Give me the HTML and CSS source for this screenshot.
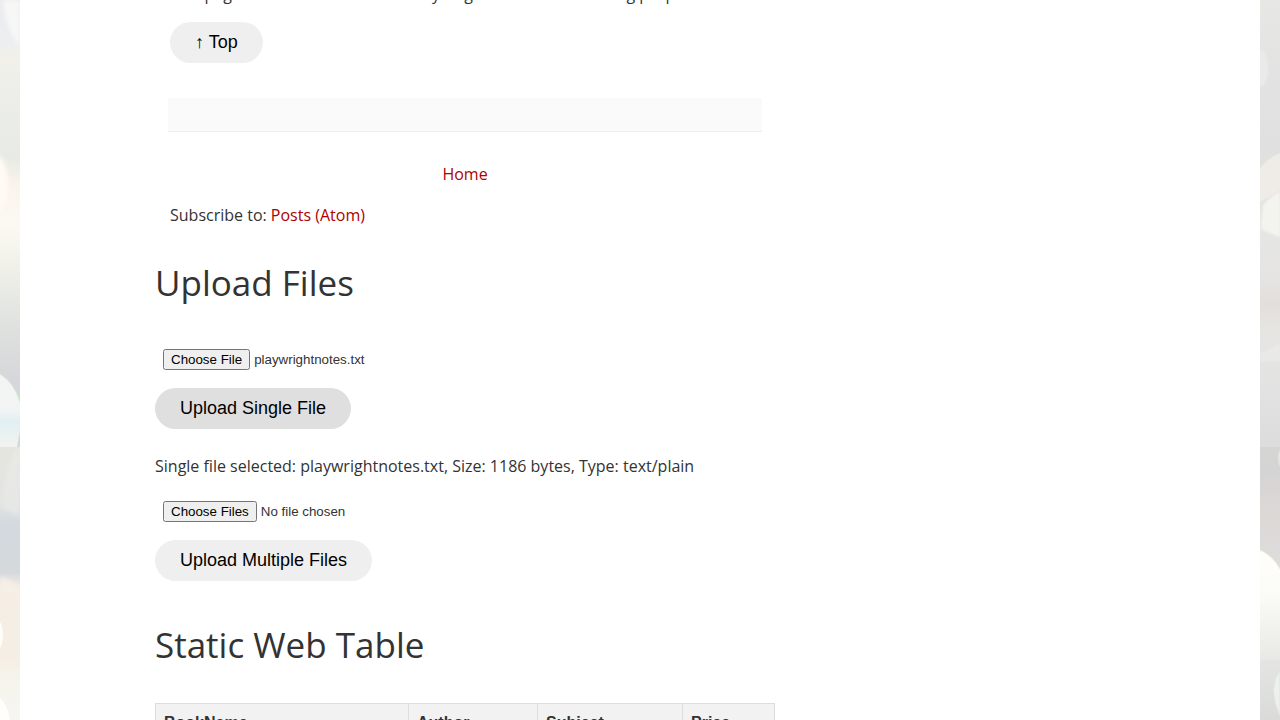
FILE: index.html
```html
<!DOCTYPE html>
<html lang="en">
<head>
<meta charset="utf-8">
<meta name="viewport" content="width=device-width, initial-scale=1">
<title>Upload Files</title>
<link rel="stylesheet" href="styles.css">
</head>
<body>
<div class="page">
  <svg class="backdrop" viewBox="0 0 20 720" preserveAspectRatio="none" aria-hidden="true">
    <defs>
      <linearGradient id="la" x1="0" y1="0" x2="0" y2="1">
        <stop offset="0" stop-color="#eaebee"/><stop offset=".09" stop-color="#edeef0"/>
        <stop offset=".13" stop-color="#f1f1e9"/><stop offset=".2" stop-color="#edeee9"/>
        <stop offset=".35" stop-color="#e8eae5"/><stop offset=".42" stop-color="#fbf3eb"/>
        <stop offset=".5" stop-color="#fcf9f3"/><stop offset=".58" stop-color="#f2f2eb"/>
        <stop offset=".68" stop-color="#e5e7e2"/><stop offset=".77" stop-color="#dcdddd"/>
        <stop offset=".85" stop-color="#d6d7da"/><stop offset="1" stop-color="#d5d7d9"/>
      </linearGradient>
      <linearGradient id="lb" x1="0" y1="0" x2="0" y2="1">
        <stop offset="0" stop-color="#e5e5df"/><stop offset=".2" stop-color="#e2e4e2"/>
        <stop offset=".28" stop-color="#d3d9df"/><stop offset=".46" stop-color="#d5d9dc"/>
        <stop offset=".52" stop-color="#f6eee6"/><stop offset=".78" stop-color="#f5eee4"/>
        <stop offset=".84" stop-color="#f5f4ec"/><stop offset="1" stop-color="#f7f5f0"/>
      </linearGradient>
      <linearGradient id="lc" x1="0" y1="0" x2="0" y2="1">
        <stop offset="0" stop-color="#f3f5f4"/><stop offset=".5" stop-color="#f2f4f3"/>
        <stop offset=".65" stop-color="#e1eff3"/><stop offset="1" stop-color="#f3f3ef"/>
      </linearGradient>
      <filter id="ls" x="-50%" y="-20%" width="200%" height="140%"><feGaussianBlur stdDeviation="2"/></filter>
    </defs>
    <rect width="20" height="447" fill="url(#la)"/>
    <path d="M3 0Q7 34 20 46V0Z" fill="#f7f7f6" filter="url(#ls)"/>
    <ellipse cx="-4" cy="184" rx="12" ry="29" fill="#fffaf3" filter="url(#ls)"/>
    <path d="M0 374Q14 382 20 402V430L17 447H0Z" fill="url(#lc)"/>
    <path d="M0 374Q14 382 20 402" fill="none" stroke="#ccebcf" stroke-width="1"/>
    <rect y="447" width="20" height="273" fill="url(#lb)"/>
    <path d="M17 447Q4 468 2 508L20 518V447Z" fill="#ebebe8" opacity=".6" filter="url(#ls)"/>
    <path d="M0 577Q10 578 20 589V594H0Z" fill="#f5efe7" filter="url(#ls)"/>
    <ellipse cx="-2" cy="635" rx="5" ry="14" fill="#fffdf7"/>
    <path d="M0 698Q7 704 10 720H0Z" fill="#fffefa"/>
  </svg>
  <main class="content">
    <div class="column">
      <section class="post">
        <p class="notice">This page includes some material by original demos for testing purposes</p>
        <button class="pill" type="button">↑ Top</button>
        <div class="post-footer"></div>
        <nav class="pager"><a href="#">Home</a></nav>
        <p class="feed">Subscribe to: <a href="#">Posts (Atom)</a></p>
      </section>

      <h2>Upload Files</h2>
      <form class="upload">
        <input class="file" type="file" id="single" aria-label="Single file">
        <button class="pill pill-active" type="button">Upload Single File</button>
        <p class="status">Single file selected: playwrightnotes.txt, Size: 1186 bytes, Type: text/plain</p>
      </form>
      <form class="upload">
        <input class="file" type="file" id="multiple" multiple aria-label="Multiple files">
        <button class="pill" type="button">Upload Multiple Files</button>
      </form>

      <h2>Static Web Table</h2>
      <table class="books">
        <colgroup><col class="col-book"><col class="col-author"><col class="col-subject"><col></colgroup>
        <thead>
          <tr><th>BookName</th><th>Author</th><th>Subject</th><th>Price</th></tr>
        </thead>
      </table>
    </div>
  </main>
  <svg class="backdrop" viewBox="0 0 20 720" preserveAspectRatio="none" aria-hidden="true">
    <defs>
      <linearGradient id="ra" x1="0" y1="0" x2="0" y2="1">
        <stop offset="0" stop-color="#e7e7e4"/><stop offset=".15" stop-color="#e3e3e3"/>
        <stop offset=".33" stop-color="#e0e0e1"/><stop offset=".5" stop-color="#e6e6e4"/>
        <stop offset=".62" stop-color="#e5e4e2"/><stop offset=".68" stop-color="#e3dedb"/>
        <stop offset=".74" stop-color="#e6e5e2"/><stop offset=".85" stop-color="#e3e3e3"/>
        <stop offset="1" stop-color="#dcdcdc"/>
      </linearGradient>
      <linearGradient id="rb" x1="0" y1="0" x2="0" y2="1">
        <stop offset="0" stop-color="#d6d5d4"/><stop offset=".1" stop-color="#d5d4d4"/>
        <stop offset=".23" stop-color="#dcd8d6"/><stop offset=".4" stop-color="#dcdcda"/>
        <stop offset=".7" stop-color="#e8e9e5"/><stop offset=".85" stop-color="#e1e1e0"/>
        <stop offset="1" stop-color="#dadada"/>
      </linearGradient>
      <linearGradient id="rc" x1="0" y1="0" x2="0" y2="1">
        <stop offset="0" stop-color="#fffefb"/><stop offset=".4" stop-color="#fbfbf8"/>
        <stop offset="1" stop-color="#e8e9e5"/>
      </linearGradient>
      <filter id="rs" x="-50%" y="-20%" width="200%" height="140%"><feGaussianBlur stdDeviation="1"/></filter>
    </defs>
    <rect width="20" height="447" fill="url(#ra)"/>
    <ellipse cx="1" cy="68" rx="7" ry="18" fill="#e9ebe9" filter="url(#rs)"/>
    <path d="M0 168Q8 158 20 153V190L2 201H0Z" fill="#efece8"/>
    <path d="M20 191Q7 199 3 206L1 229L20 237Z" fill="#f4f4ef" filter="url(#rs)"/>
    <path d="M20 343L0 354V361H20Z" fill="#e9e9e7" filter="url(#rs)"/>
    <rect y="447" width="20" height="273" fill="url(#rb)"/>
    <path d="M0 550Q13 556 20 569V660H0Z" fill="url(#rc)"/>
    <path d="M0 550Q13 556 20 569" fill="none" stroke="#f8ecd9" stroke-width="1"/>
    <path d="M20 670Q7 688 20 716Z" fill="#eff0ed" stroke="#d9e9d9"/>
    <ellipse cx="21" cy="458" rx="3" ry="9" fill="#e3e5df"/>
  </svg>
</div>
<script src="main.js"></script>
</body>
</html>
```

FILE: styles.css
```css
* { box-sizing: border-box; }

body {
  margin: 0;
  background: #fff;
  color: #333;
  font: 16px/22px "Open Sans", "Noto Sans", sans-serif;
}

a { color: #b00000; text-decoration: none; }
p { margin: 0; }

.page {
  display: flex;
  height: 100vh;
  overflow: hidden;
}

.backdrop { flex: none; width: 20px; height: 100%; }

.content { flex: 1; padding: 0 135px; }
.column { max-width: 620px; }

.post { padding: 0 15px; }
.notice { margin-top: -17px; margin-bottom: 17px; white-space: nowrap; }

.pill {
  display: block;
  padding: 10px 25px;
  border: 0;
  border-radius: 25px;
  background: #efefef;
  color: #000;
  font: 18px/21px "Liberation Sans", Arial, sans-serif;
}
.pill-active { background: #dfdfdf; }

.post-footer {
  height: 34px;
  margin: 35px -2px 31px;
  border-bottom: 1px solid #eee;
  background: #fafafa;
}

.pager { text-align: center; }
.feed { margin-top: 19px; }

h2 {
  margin: 32px 0 33px;
  font-size: 35px;
  font-weight: 400;
  line-height: 50px;
}
.upload + h2 { margin-top: 39px; }

.upload { margin-bottom: 16px; }
.file {
  display: block;
  width: 100%;
  margin-bottom: 10px;
  padding: 8px;
  color: #333;
}
.status { margin-top: 26px; }

.books {
  width: 100%;
  border-collapse: collapse;
  table-layout: fixed;
  font-family: "Liberation Sans", Arial, sans-serif;
}
.books th {
  padding: 8px;
  border: 1px solid #ddd;
  background: #f2f2f2;
  text-align: left;
}
.col-book { width: 253px; }
.col-author { width: 129px; }
.col-subject { width: 145px; }
```

FILE: main.js
```js
// Preselect the sample notes in the single-file picker.
const selection = new DataTransfer();
selection.items.add(new File(["x".repeat(1186)], "playwrightnotes.txt", { type: "text/plain" }));
document.getElementById("single").files = selection.files;
```
